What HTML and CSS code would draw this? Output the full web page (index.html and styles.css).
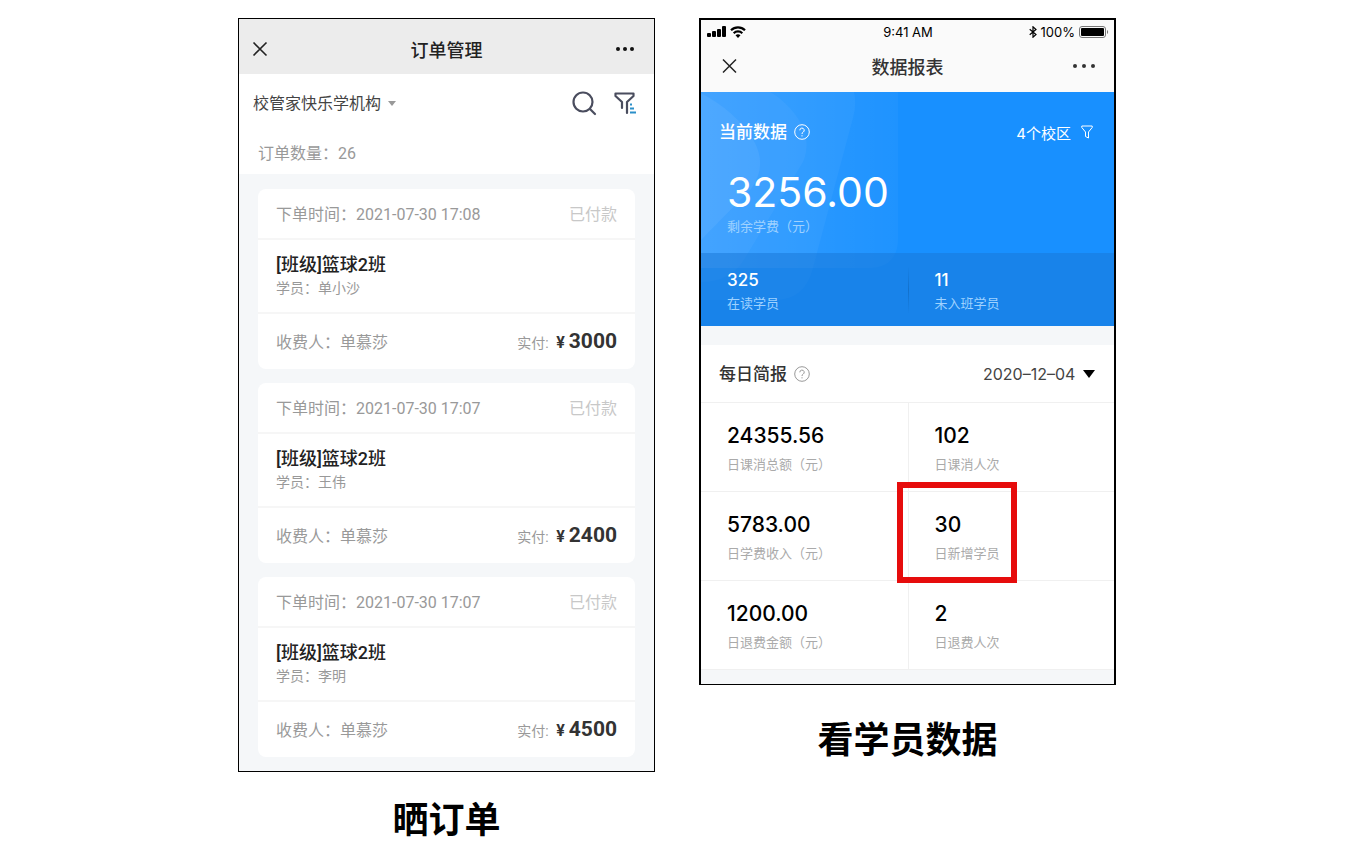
FILE: index.html
```html
<!DOCTYPE html>
<html lang="zh-CN">
<head>
  <meta charset="UTF-8">
  <meta name="viewport" content="width=device-width, initial-scale=1.0">
  <title>订单与学员数据</title>
  <link rel="stylesheet" href="styles.css">
</head>
<body>

  <main class="board">

    <!-- Orders -->
    <figure class="panel">
      <div class="phone orders">
        <header class="nav orders-nav">
          <button class="icon-btn" aria-label="关闭">
            <svg width="16" height="16" viewBox="0 0 16 16"><path d="M1.5 1.5l13 13M14.5 1.5l-13 13" stroke="#222" stroke-width="1.6" fill="none"/></svg>
          </button>
          <h1>订单管理</h1>
          <button class="icon-btn" aria-label="更多">
            <svg width="26" height="6" viewBox="0 0 26 6" fill="#111"><circle cx="3" cy="3" r="2"/><circle cx="10" cy="3" r="2"/><circle cx="17" cy="3" r="2"/></svg>
          </button>
        </header>

        <div class="toolbar">
          <div class="school">
            <select aria-label="机构"><option>校管家快乐学机构</option></select>
            <svg width="8" height="5" viewBox="0 0 8 5"><path d="M0 0h8L4 5z" fill="#999"/></svg>
          </div>
          <div class="tools">
            <button class="icon-btn" aria-label="搜索">
              <svg width="26" height="26" viewBox="0 0 26 26" fill="none" stroke="#4a4d5e" stroke-width="2.2" stroke-linecap="round"><circle cx="12" cy="12" r="9.5"/><path d="M19 19l5 5"/></svg>
            </button>
            <button class="icon-btn" aria-label="筛选">
              <svg width="24" height="24" viewBox="0 0 24 24" fill="none" stroke="#4a4d5e" stroke-width="2.2" stroke-linejoin="round" stroke-linecap="round"><path d="M9 17v-6L2.5 5V2.5h18V5L14 11v11"/><path d="M17 13.500h2M17 17.500h4M17 21.500h6" stroke="#2b8fc9" stroke-linecap="butt"/></svg>
            </button>
          </div>
        </div>
        <p class="count">订单数量：26</p>

        <div class="order-list">
          <article class="order">
            <div class="order-head"><span>下单时间：2021-07-30 17:08</span><span class="status">已付款</span></div>
            <div class="order-body">
              <h2>[班级]篮球2班</h2>
              <p>学员：单小沙</p>
            </div>
            <div class="order-foot"><span>收费人：单慕莎</span><span class="paid">实付: <b class="yen">¥</b><b class="amount">3000</b></span></div>
          </article>
          <article class="order">
            <div class="order-head"><span>下单时间：2021-07-30 17:07</span><span class="status">已付款</span></div>
            <div class="order-body">
              <h2>[班级]篮球2班</h2>
              <p>学员：王伟</p>
            </div>
            <div class="order-foot"><span>收费人：单慕莎</span><span class="paid">实付: <b class="yen">¥</b><b class="amount">2400</b></span></div>
          </article>
          <article class="order">
            <div class="order-head"><span>下单时间：2021-07-30 17:07</span><span class="status">已付款</span></div>
            <div class="order-body">
              <h2>[班级]篮球2班</h2>
              <p>学员：李明</p>
            </div>
            <div class="order-foot"><span>收费人：单慕莎</span><span class="paid">实付: <b class="yen">¥</b><b class="amount">4500</b></span></div>
          </article>
        </div>
      </div>
      <figcaption>晒订单</figcaption>
    </figure>

    <!-- Report -->
    <figure class="panel">
      <div class="phone report">
        <div class="status-bar">
          <div class="signal">
            <svg width="19" height="12" viewBox="0 0 19 12"><rect x="0" y="7" width="4" height="4" rx="1"/><rect x="5" y="5" width="4" height="6" rx="1"/><rect x="10" y="3" width="4" height="8" rx="1"/><rect x="15" y="0" width="4" height="11" rx="1"/></svg>
            <svg width="16" height="12" viewBox="0 0 16 12" fill="none" stroke="#000" stroke-width="2.2"><path d="M1 4.300a10 10 0 0 1 14 0M3.700 7.200a6.200 6.200 0 0 1 8.600 0"/><path d="M8 12L5.500 9.300a3.700 3.700 0 0 1 5 0z" fill="#000" stroke="none"/></svg>
          </div>
          <span>9:41 AM</span>
          <div class="battery">
            <svg width="8" height="12" viewBox="0 0 8 12" fill="none" stroke="#000" stroke-width="1.2"><path d="M.7 3.200L7 8.500 4 11.200V.8L7 3.500.7 8.800"/></svg>
            <span>100%</span>
            <svg width="30" height="12" viewBox="0 0 30 12"><rect x=".5" y=".5" width="26" height="11" rx="2.5" fill="none" stroke="#777"/><rect x="2" y="2" width="23" height="8" rx="1"/><path d="M28 4v4c1.500-.6 1.500-3.400 0-4z" fill="#777"/></svg>
          </div>
        </div>
        <header class="nav report-nav">
          <button class="icon-btn" aria-label="关闭">
            <svg width="20" height="16" viewBox="0 0 20 16"><path d="M4 1.500l13 13M17 1.500l-13 13" stroke="#222" stroke-width="1.5" fill="none"/></svg>
          </button>
          <h1>数据报表</h1>
          <button class="icon-btn" aria-label="更多">
            <svg width="24" height="6" viewBox="0 0 24 6" fill="#333"><circle cx="3" cy="3" r="2"/><circle cx="12" cy="3" r="2"/><circle cx="21" cy="3" r="2"/></svg>
          </button>
        </header>

        <section class="hero">
          <svg class="hero-art" width="197" height="234" viewBox="0 0 197 234" fill="#fff">
            <defs>
              <linearGradient id="fade" x1="0" y1="0" x2="1" y2="0">
                <stop offset="0" stop-color="#fff" stop-opacity=".12"/>
                <stop offset="1" stop-color="#fff" stop-opacity=".03"/>
              </linearGradient>
            </defs>
            <path d="M0 0h197v146q0 30-30 30H0z" fill="url(#fade)"/>
            <path d="M0 0h153q3 12-1 26l-40 150q-8 32-38 32H0z" fill-opacity=".04"/>
            <path d="M0 0h69c14 8 28 22 35 40q4 16-2 30L44 166q-14 24-44 24z" fill-opacity=".04"/>
            <path d="M0 1c22 12 42 28 54 50q12 24-4 46L0 148z" fill-opacity=".06"/>
          </svg>
          <div class="hero-main">
            <div class="hero-top">
              <div class="heading">
                <h2>当前数据</h2>
                <button class="icon-btn" aria-label="当前数据说明">
                  <svg width="16" height="16" viewBox="0 0 16 16" fill="none" stroke="currentColor"><circle cx="8" cy="8" r="7.3"/><path d="M5.800 6.300a2.200 2.200 0 1 1 3.300 1.900c-.8.500-1.100.8-1.100 1.800M8 11.200v1.200"/></svg>
                </button>
              </div>
              <button class="campus">4个校区
                <svg width="12" height="14" viewBox="0 0 12 14" fill="none" stroke="#fff" stroke-linejoin="round"><path d="M.8 1h10.400v1.500L7.500 7v6l-3-1.500V7L.8 2.500z"/></svg>
              </button>
            </div>
            <p class="total">3256.00</p>
            <p class="label">剩余学费（元）</p>
          </div>
          <div class="hero-strip">
            <div class="strip-item"><b>325</b><p class="label">在读学员</p></div>
            <div class="strip-item"><b>11</b><p class="label">未入班学员</p></div>
          </div>
        </section>

        <section class="daily">
          <div class="daily-top">
            <div class="heading">
              <h2>每日简报</h2>
              <button class="icon-btn" aria-label="每日简报说明">
                <svg width="16" height="16" viewBox="0 0 16 16" fill="none" stroke="currentColor"><circle cx="8" cy="8" r="7.3"/><path d="M5.800 6.300a2.200 2.200 0 1 1 3.300 1.900c-.8.500-1.100.8-1.100 1.800M8 11.200v1.200"/></svg>
              </button>
            </div>
            <div class="date">
              <select aria-label="日期"><option>2020–12–04</option></select>
              <svg width="12" height="8" viewBox="0 0 12 8"><path d="M0 0h12L6 8z"/></svg>
            </div>
          </div>
          <div class="stats">
            <div class="stat"><b>24355.56</b><p>日课消总额（元）</p></div>
            <div class="stat"><b>102</b><p>日课消人次</p></div>
            <div class="stat"><b>5783.00</b><p>日学费收入（元）</p></div>
            <div class="stat marked"><b>30</b><p>日新增学员</p></div>
            <div class="stat"><b>1200.00</b><p>日退费金额（元）</p></div>
            <div class="stat"><b>2</b><p>日退费人次</p></div>
          </div>
        </section>
      </div>
      <figcaption class="report-caption">看学员数据</figcaption>
    </figure>

  </main>

</body>
</html>
```
FILE: styles.css
```css
*, *::after {
  box-sizing: border-box;
}
body {
  margin: 0;
  background-color: #fff;
  font-family: Roboto, "Noto Sans CJK SC", sans-serif;
}
h1, h2, p, figure {
  margin: 0;
}
h1, h2 {
  font-weight: 500;
}
svg {
  display: block;
}
button, select {
  appearance: none;
  border: none;
  padding: 0;
  background: none;
  font: inherit;
  color: inherit;
  cursor: pointer;
}
.board {
  display: flex;
  justify-content: center;
  align-items: flex-start;
  gap: 44px;
  padding: 18px 16px 16px 20px;
}
.panel {
  flex: 1;
  max-width: 417px;
}
.phone {
  border: 1px solid #000;
}
figcaption {
  margin-top: 25px;
  line-height: 48px;
  font-size: 36px;
  font-weight: bold;
  text-align: center;
}
.report-caption {
  margin-top: 32px;
}
.nav {
  display: grid;
  grid-template-columns: 1fr auto 1fr;
  align-items: center;
}
.nav h1 {
  font-size: 18px;
}
.nav .icon-btn:last-child {
  justify-self: end;
}
.nav .icon-btn:first-child {
  justify-self: start;
}

/* Orders */
.orders {
  background-color: #fff;
  color: #999;
}
.orders-nav {
  height: 55px;
  padding: 5px 13px 0;
  background-color: #ececec;
  color: #222;
}
.toolbar {
  display: flex;
  justify-content: space-between;
  align-items: center;
  height: 58px;
  padding: 0 17px 0 14px;
}
.school {
  display: flex;
  align-items: center;
  gap: 6px;
  font-size: 16px;
  color: #444;
}
.tools {
  display: flex;
  align-items: center;
  gap: 16px;
}
.count {
  height: 42px;
  padding-left: 19px;
  line-height: 44px;
  font-size: 16px;
}
.order-list {
  display: flex;
  flex-direction: column;
  gap: 14px;
  padding: 15px 19px 14px;
  background-color: #f5f7f9;
}
.order {
  border-radius: 8px;
  background-color: #fff;
  font-size: 16px;
}
.order-head, .order-foot {
  display: flex;
  justify-content: space-between;
  align-items: center;
  padding: 0 18px 2px;
}
.order-head {
  height: 51px;
  border-bottom: 2px solid #f6f6f6;
}
.status {
  color: #c8c8c8;
}
.order-body {
  height: 74px;
  padding: 12px 18px 0;
  border-bottom: 2px solid #f6f6f6;
}
.order-body h2 {
  line-height: 26px;
  font-size: 18px;
  color: #222;
}
.order-body p {
  line-height: 20px;
  font-size: 14px;
}
.order-foot {
  height: 55px;
}
.paid {
  font-size: 14px;
}
.yen {
  margin: 0 4px;
  font-size: 16px;
  color: #333;
}
.amount {
  font-size: 21px;
  color: #333;
}

/* Report */
.report {
  border-width: 2px 2px 1px;
  background-color: #f5f7f9;
  font-family: Inter, "Noto Sans CJK SC", sans-serif;
}
.status-bar {
  display: grid;
  grid-template-columns: 1fr auto 1fr;
  align-items: center;
  height: 23px;
  padding: 0 5px 0 6px;
  background-color: #fafafa;
  font-size: 13px;
}
.signal, .battery {
  display: flex;
  align-items: center;
  gap: 4px;
}
.battery {
  justify-content: flex-end;
}
.report-nav {
  height: 49px;
  padding: 0 18px 4px;
  background-color: #fafafa;
  color: #333;
}
.hero {
  position: relative;
  background-color: #1890ff;
  color: #fff;
}
.hero-art {
  position: absolute;
  top: 0;
  left: 0;
}
.hero-main {
  position: relative;
  height: 161px;
  padding: 27px 21px 0 18px;
}
.hero-top, .daily-top {
  display: flex;
  justify-content: space-between;
  align-items: center;
}
.heading {
  display: flex;
  align-items: center;
  gap: 7px;
}
.heading h2 {
  line-height: 26px;
  font-size: 17px;
}
.campus {
  display: flex;
  align-items: center;
  gap: 10px;
  font-size: 15px;
}
.total {
  padding-left: 8px;
  margin-top: 23px;
  line-height: 48px;
  font-size: 41px;
}
.hero-main .label {
  padding-left: 8px;
}
.label {
  line-height: 20px;
  font-size: 13px;
  color: #9fd2ff;
}
.hero-strip {
  position: relative;
  display: grid;
  grid-template-columns: 1fr 1fr;
  height: 73px;
  padding: 14px 0;
  background-color: rgba(24, 118, 214, 0.5);
}
.strip-item {
  padding-left: 26px;
}
.strip-item + .strip-item {
  border-left: 1px solid;
  border-image: linear-gradient(transparent, #1271cc, transparent) 1;
}
.strip-item b {
  display: block;
  line-height: 26px;
  font-size: 17px;
  font-weight: 500;
}
.daily {
  margin: 19px 0 14px;
  background-color: #fff;
}
.daily-top {
  height: 58px;
  padding: 0 19px 0 18px;
  border-bottom: 1px solid #f0f0f0;
  color: #333;
}
.daily-top .icon-btn {
  color: #999;
}
.date {
  display: flex;
  align-items: center;
  gap: 7px;
  font-size: 16px;
  color: #444;
}
.stats {
  display: grid;
  grid-template-columns: 1fr 1fr;
}
.stat {
  position: relative;
  padding: 19px 0 17px 26px;
  border-bottom: 1px solid #f0f0f0;
}
.stat:nth-child(even) {
  border-left: 1px solid #f0f0f0;
}
.stat b {
  display: block;
  margin-bottom: 4px;
  line-height: 28px;
  font-size: 21px;
  font-weight: 500;
}
.stat p {
  line-height: 20px;
  font-size: 13px;
  color: #aaa;
}
.marked::after {
  content: "";
  position: absolute;
  z-index: 1;
  top: -10px;
  left: -12px;
  width: 120px;
  height: 101px;
  border: 6px solid #e60c0c;
}
```
